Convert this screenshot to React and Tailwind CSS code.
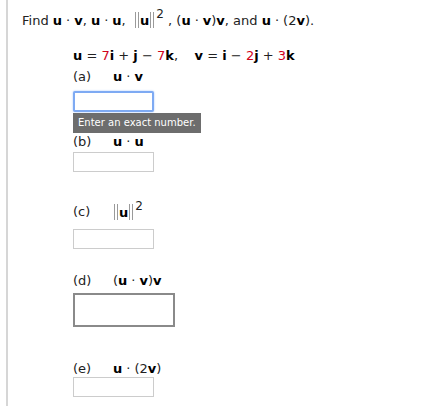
import React from "react";

const B = ({ children }) => <b className="font-bold text-black">{children}</b>;
const R = ({ children }) => <span className="text-[#d0021b]">{children}</span>;
const Dot = () => <span className="mx-[4px]">·</span>;

const Bars = () => (
  <span className="inline-flex gap-[2px] align-[-3px] mx-[1px]">
    <span className="inline-block h-[16px] w-px bg-[#9a9a9a]" />
    <span className="inline-block h-[16px] w-px bg-[#9a9a9a]" />
  </span>
);

const Norm = () => (
  <span className="whitespace-nowrap">
    <Bars />
    <B>u</B>
    <Bars />
    <span className="relative -top-[7px] text-[12px] ml-[1px]">2</span>
  </span>
);

const Label = ({ tag, children }) => (
  <div className="flex h-4 items-center leading-4 whitespace-nowrap">
    <span className="w-[40px]">({tag})</span>
    <span>{children}</span>
  </div>
);

const Box = ({ className = "" }) => (
  <div className={"bg-white border " + className} />
);

export default function App() {
  return (
    <div className="h-[406px] w-[426px] bg-white pl-[6px] text-[13px] text-[#222]" style={{ fontFamily: '"DejaVu Sans", Verdana, sans-serif' }}>
      <div className="h-full border-l-2 border-[#d6d6d6] pl-[14px]">
        <div className="pt-[12px] leading-4 h-[28px] whitespace-nowrap">
          Find <B>u</B>
          <Dot />
          <B>v</B>, <B>u</B>
          <Dot />
          <B>u</B>, &nbsp;<Norm /> , (<B>u</B>
          <Dot />
          <B>v</B>)<B>v</B>, and <B>u</B>
          <Dot />
          (2<B>v</B>).
        </div>

        <div className="pl-[51px]">
          <div className="mt-[20px] h-4 leading-4 whitespace-nowrap">
            <B>u</B> = <R>7</R>
            <B>i</B> + <B>j</B> − <R>7</R>
            <B>k</B>, &nbsp;&nbsp; <B>v</B> = <B>i</B> − <R>2</R>
            <B>j</B> + <R>3</R>
            <B>k</B>
          </div>

          <div className="mt-[5px]">
            <Label tag="a">
              <B>u</B>
              <Dot />
              <B>v</B>
            </Label>
          </div>
          <div className="mt-[6px] h-[21px] w-[81px] rounded-[2px] border-2 border-[#7eaaf3] bg-white shadow-[0_0_2px_#9cc0ff]" />
          <div className="inline-block h-[20px] bg-[#6d6d6d] px-[5px] text-[10px] leading-[20px] text-white whitespace-nowrap">
            Enter an exact number.
          </div>

          <div className="mt-[1px]">
            <Label tag="b">
              <B>u</B>
              <Dot />
              <B>u</B>
            </Label>
          </div>
          <Box className="mt-[2px] h-[20px] w-[81px] border-[#cccccc]" />

          <div className="mt-[32px]">
            <Label tag="c">
              <Norm />
            </Label>
          </div>
          <Box className="mt-[9px] h-[20px] w-[81px] border-[#cccccc]" />

          <div className="mt-[24px]">
            <Label tag="d">
              (<B>u</B>
              <Dot />
              <B>v</B>)<B>v</B>
            </Label>
          </div>
          <Box className="mt-[4px] h-[34px] w-[102px] border-2 border-[#8a8a8a]" />

          <div className="mt-[34px]">
            <Label tag="e">
              <B>u</B>
              <Dot />
              (2<B>v</B>)
            </Label>
          </div>
          <Box className="h-[20px] w-[81px] border-[#cccccc]" />
        </div>
      </div>
    </div>
  );
}
